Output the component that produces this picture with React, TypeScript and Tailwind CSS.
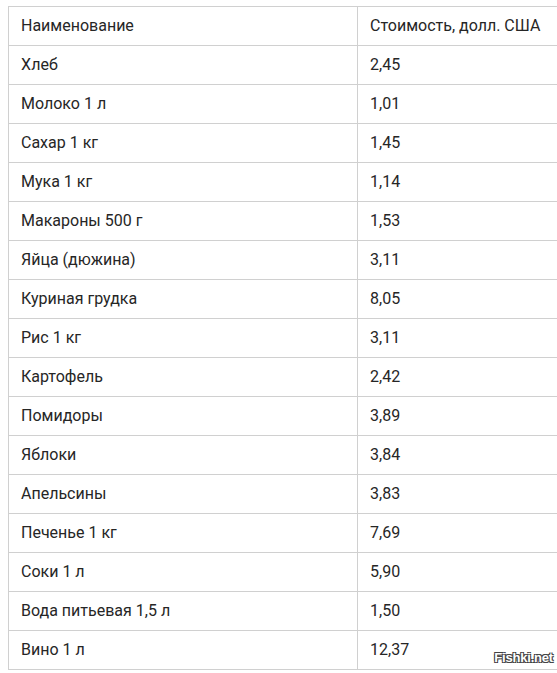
import React from 'react';

const rows: [string, string][] = [
  ['Наименование', 'Стоимость, долл. США'],
  ['Хлеб', '2,45'],
  ['Молоко 1 л', '1,01'],
  ['Сахар 1 кг', '1,45'],
  ['Мука 1 кг', '1,14'],
  ['Макароны 500 г', '1,53'],
  ['Яйца (дюжина)', '3,11'],
  ['Куриная грудка', '8,05'],
  ['Рис 1 кг', '3,11'],
  ['Картофель', '2,42'],
  ['Помидоры', '3,89'],
  ['Яблоки', '3,84'],
  ['Апельсины', '3,83'],
  ['Печенье 1 кг', '7,69'],
  ['Соки 1 л', '5,90'],
  ['Вода питьевая 1,5 л', '1,50'],
  ['Вино 1 л', '12,37'],
];

export default function App() {
  return (
    <div className="relative w-[557px] h-[673px] overflow-hidden bg-white font-['Roboto',sans-serif] text-[16px] text-[#262626]">
      <div className="ml-2 mt-[6px] w-[600px] border-t border-l border-[#d0d0d0]">
        {rows.map(([name, price]) => (
          <div key={name} className="flex h-[39px] border-b border-[#d0d0d0]">
            <div className="w-[349px] shrink-0 border-r border-[#d0d0d0] pl-3 flex items-center">{name}</div>
            <div className="pl-3 flex items-center">{price}</div>
          </div>
        ))}
      </div>
      {/* watermark */}
      <div className="absolute right-[4px] bottom-[6px] font-['Liberation_Sans',sans-serif] font-bold text-[13px] text-white tracking-[-0.2px] [text-shadow:-1px_-1px_0_#444,1px_-1px_0_#444,-1px_1px_0_#444,1px_1px_0_#444]">
        Fishki.net
      </div>
    </div>
  );
}
